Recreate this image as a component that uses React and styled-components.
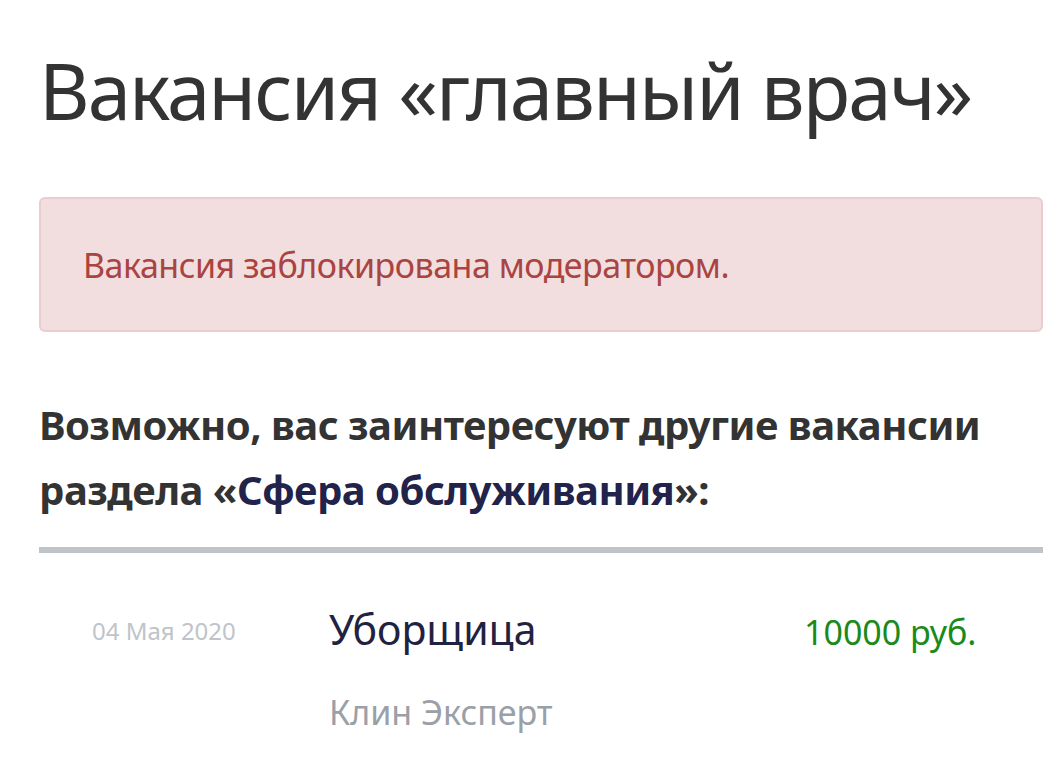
import React from "react";
import styled, { createGlobalStyle } from "styled-components";

const GlobalStyle = createGlobalStyle`
  html, body {
    margin: 0;
    padding: 0;
    background: #fff;
  }
  body {
    font-family: "Noto Sans", "Open Sans", sans-serif;
  }
`;

const App = () => {
  return (
    <Page>
      <GlobalStyle />
      <Title>Вакансия «главный врач»</Title>
      <Alert>Вакансия заблокирована модератором.</Alert>
      <Heading>
        Возможно, вас заинтересуют другие вакансии раздела «
        <SectionLink href="#">Сфера обслуживания</SectionLink>»:
      </Heading>
      <Divider />
      <Row>
        <Date>04 Мая 2020</Date>
        <Info>
          <JobTitle href="#">Уборщица</JobTitle>
          <Company>Клин Эксперт</Company>
        </Info>
        <Salary>10000 руб.</Salary>
      </Row>
    </Page>
  );
};

export default App;

const Page = styled.div`
  padding: 40px 15px 0 39px;
  width: 1004px;
`;

const Title = styled.h1`
  margin: 0;
  font-weight: 400;
  font-size: 78px;
  line-height: 100px;
  color: #333;
  letter-spacing: -2px;
  white-space: nowrap;
`;

const Alert = styled.div`
  margin-top: 57px;
  height: 135px;
  box-sizing: border-box;
  padding: 0 42px;
  display: flex;
  align-items: center;
  background: #f2dede;
  border: 2px solid #ebccd1;
  border-radius: 6px;
  color: #a94442;
  font-size: 34px;
  letter-spacing: -0.5px;
`;

const Heading = styled.h2`
  margin: 60px 0 0;
  font-weight: 700;
  font-size: 40px;
  line-height: 65px;
  color: #333;
  letter-spacing: -0.5px;
`;

const SectionLink = styled.a`
  color: #22234a;
  text-decoration: none;
`;

const Divider = styled.div`
  margin-top: 25px;
  height: 6px;
  background: #bfc4c9;
`;

const Row = styled.div`
  display: flex;
  align-items: flex-start;
  padding: 50px 0 0 53px;
`;

const Date = styled.div`
  width: 237px;
  font-size: 24px;
  color: #c0c4c8;
  padding-top: 11px;
`;

const Info = styled.div`
  width: 475px;
  display: flex;
  flex-direction: column;
  gap: 34px;
`;

const JobTitle = styled.a`
  font-size: 41px;
  color: #1f2240;
  text-decoration: none;
  line-height: 52px;
`;

const Company = styled.div`
  font-size: 34px;
  color: #9aa0a8;
`;

const Salary = styled.div`
  flex: 1;
  font-size: 34px;
  color: #1a8a1a;
  padding-top: 6px;
`;
